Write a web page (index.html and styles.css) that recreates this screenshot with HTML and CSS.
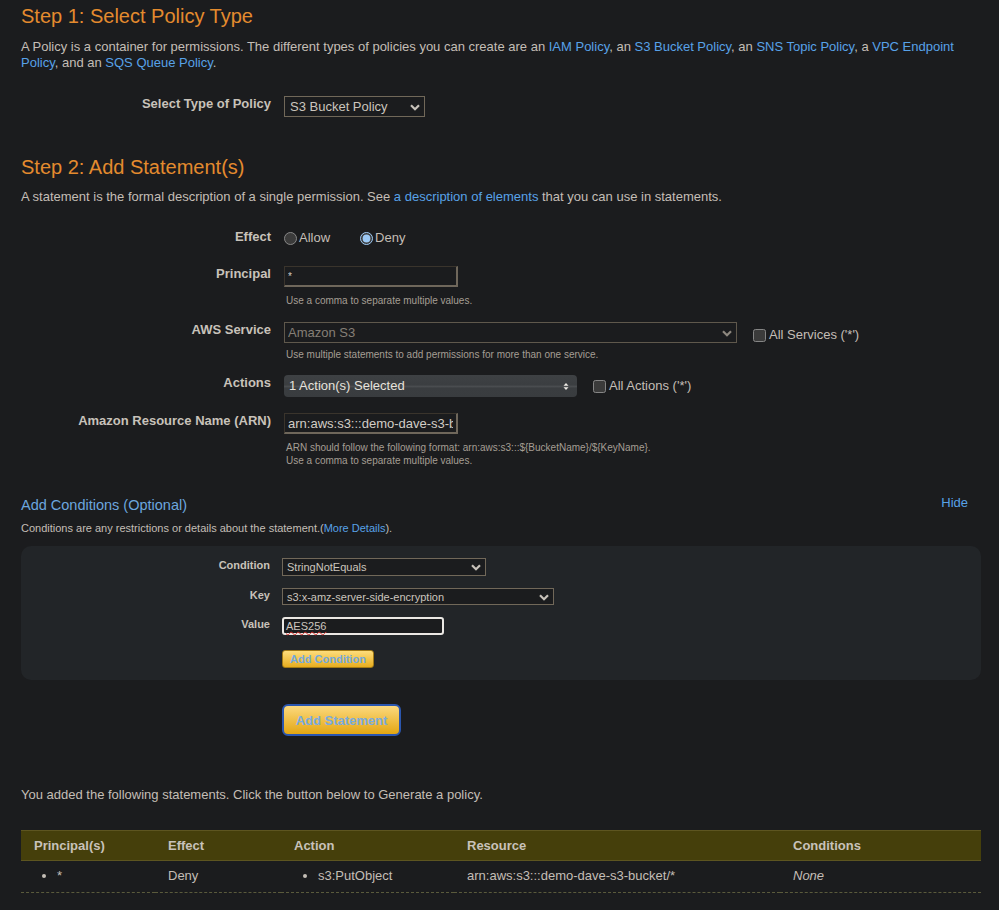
FILE: index.html
```html
<!DOCTYPE html>
<html lang="en">
<head>
<meta charset="utf-8">
<title>AWS Policy Generator</title>
<link rel="stylesheet" href="styles.css">
</head>
<body>
<main class="page">
  <h2 class="step-title">Step 1: Select Policy Type</h2>
  <p class="intro">A Policy is a container for permissions. The different types of policies you can create are an <a href="#">IAM Policy</a>, an <a href="#">S3 Bucket Policy</a>, an <a href="#">SNS Topic Policy</a>, a <a href="#">VPC Endpoint</a> <a href="#">Policy</a>, and an <a href="#">SQS Queue Policy</a>.</p>

  <div class="field field-policy">
    <label class="field-label">Select Type of Policy</label>
    <div class="field-control">
      <span class="select-wrap sel-policy">
        <select class="select"><option>S3 Bucket Policy</option></select>
        <svg class="chev" width="10" height="7" viewBox="0 0 10 7"><path d="M1 1.2 L5 5.2 L9 1.2" fill="none" stroke="currentColor" stroke-width="2.2"/></svg>
      </span>
    </div>
  </div>

  <h2 class="step-title step2">Step 2: Add Statement(s)</h2>
  <p class="intro2">A statement is the formal description of a single permission. See <a href="#">a description of elements</a> that you can use in statements.</p>

  <div class="field field-effect">
    <label class="field-label">Effect</label>
    <div class="field-control radios">
      <label class="radio"><input type="radio" name="effect">Allow</label>
      <label class="radio"><input type="radio" name="effect" checked>Deny</label>
    </div>
  </div>

  <div class="field field-principal">
    <label class="field-label">Principal</label>
    <div class="field-control">
      <input class="text-input input-principal" type="text" value="*">
      <div class="hint hint-principal">Use a comma to separate multiple values.</div>
    </div>
  </div>

  <div class="field field-service">
    <label class="field-label">AWS Service</label>
    <div class="field-control">
      <div class="control-line">
        <span class="select-wrap sel-service">
          <select class="select" disabled><option>Amazon S3</option></select>
          <svg class="chev" width="10" height="7" viewBox="0 0 10 7"><path d="M1 1.2 L5 5.2 L9 1.2" fill="none" stroke="currentColor" stroke-width="2.2"/></svg>
        </span>
        <label class="check check-services"><input type="checkbox">All Services ('*')</label>
      </div>
      <div class="hint hint-service">Use multiple statements to add permissions for more than one service.</div>
    </div>
  </div>

  <div class="field field-actions">
    <label class="field-label">Actions</label>
    <div class="field-control">
      <div class="control-line">
        <div class="multi-select">
          <span>1 Action(s) Selected</span>
          <svg width="6" height="9" viewBox="0 0 6 9"><path d="M0.5 3.8 L3 1 L5.5 3.8 Z M0.5 5.2 L3 8 L5.5 5.2 Z" fill="#ece9e4"/></svg>
        </div>
        <label class="check check-actions"><input type="checkbox">All Actions ('*')</label>
      </div>
    </div>
  </div>

  <div class="field field-arn">
    <label class="field-label">Amazon Resource Name (ARN)</label>
    <div class="field-control">
      <input class="text-input input-arn" type="text" value="arn:aws:s3:::demo-dave-s3-bucket/*">
      <div class="hint hint-arn">ARN should follow the following format: arn:aws:s3:::${BucketName}/${KeyName}.<br>Use a comma to separate multiple values.</div>
    </div>
  </div>

  <div class="conditions-head">
    <h3 class="conditions-title">Add Conditions (Optional)</h3>
    <a href="#" class="hide-link">Hide</a>
  </div>
  <p class="conditions-desc">Conditions are any restrictions or details about the statement.(<a href="#">More Details</a>).</p>

  <section class="conditions-box">
    <div class="cfield">
      <label class="cfield-label">Condition</label>
      <span class="select-wrap sel-condition">
        <select class="select select-small"><option>StringNotEquals</option></select>
        <svg class="chev" width="10" height="7" viewBox="0 0 10 7"><path d="M1 1.2 L5 5.2 L9 1.2" fill="none" stroke="currentColor" stroke-width="2.2"/></svg>
      </span>
    </div>
    <div class="cfield cfield-key">
      <label class="cfield-label">Key</label>
      <span class="select-wrap sel-key">
        <select class="select select-small"><option>s3:x-amz-server-side-encryption</option></select>
        <svg class="chev" width="10" height="7" viewBox="0 0 10 7"><path d="M1 1.2 L5 5.2 L9 1.2" fill="none" stroke="currentColor" stroke-width="2.2"/></svg>
      </span>
    </div>
    <div class="cfield cfield-value">
      <label class="cfield-label">Value</label>
      <div class="value-input"><span class="misspelled">AES256</span></div>
    </div>
    <div class="cfield cfield-button">
      <span></span>
      <button class="btn-small" type="button">Add Condition</button>
    </div>
  </section>

  <div class="statement-action">
    <button class="btn-large" type="button">Add Statement</button>
  </div>

  <p class="added-text">You added the following statements. Click the button below to Generate a policy.</p>

  <table class="statements">
    <colgroup>
      <col class="col-principal">
      <col class="col-effect">
      <col class="col-action">
      <col class="col-resource">
      <col class="col-conditions">
    </colgroup>
    <thead>
      <tr><th>Principal(s)</th><th>Effect</th><th>Action</th><th>Resource</th><th>Conditions</th></tr>
    </thead>
    <tbody>
      <tr>
        <td><ul class="cell-list"><li>*</li></ul></td>
        <td>Deny</td>
        <td><ul class="cell-list list-action"><li>s3:PutObject</li></ul></td>
        <td>arn:aws:s3:::demo-dave-s3-bucket/*</td>
        <td><em>None</em></td>
      </tr>
    </tbody>
  </table>
</main>
</body>
</html>
```

FILE: styles.css
```css
* { box-sizing: border-box; }

html, body {
  background: #1b1c1e;
}

body {
  margin: 0;
  color: #c4beb6;
  font-family: "Liberation Sans", Arial, sans-serif;
  font-size: 13px;
  line-height: 16px;
}

a {
  color: #58a2e8;
  text-decoration: none;
}

.page {
  width: 960px;
  margin-left: 21px;
  padding-top: 4px;
  padding-bottom: 18px;
}

.step-title {
  margin: 0;
  font-size: 20px;
  line-height: 24px;
  font-weight: normal;
  color: #e48b2e;
}

.intro {
  margin: 11px 0 0;
}

.step2 {
  margin-top: 38px;
}

.intro2 {
  margin: 10px 0 0;
}

/* form rows */
.field {
  display: grid;
  grid-template-columns: 250px 1fr;
  column-gap: 13px;
  align-items: start;
}

.field-label {
  text-align: right;
  font-weight: bold;
  line-height: 15px;
  color: #c8c2ba;
}

.field-policy { margin-top: 25px; }
.field-effect { margin-top: 25px; }
.field-principal { margin-top: 20px; }
.field-service { margin-top: 15px; }
.field-actions { margin-top: 14px; }
.field-arn { margin-top: 16px; }

.field-effect .field-label { margin-top: -1px; }

.select-wrap {
  position: relative;
  display: inline-block;
  vertical-align: top;
  color: #c8c2ba;
}

.select-wrap .chev {
  position: absolute;
  right: 5px;
  top: 50%;
  margin-top: -3px;
  pointer-events: none;
}

.select {
  appearance: none;
  -webkit-appearance: none;
  display: block;
  width: 100%;
  height: 21px;
  margin: 0;
  padding: 0 18px 0 4px;
  border: 1px solid #716859;
  border-radius: 0;
  background: #1b1c1e;
  color: #cbc5bd;
  font-family: "Liberation Sans", Arial, sans-serif;
  font-size: 13px;
}

.sel-policy { width: 141px; }
.sel-policy .select { padding-left: 5px; }
.sel-service { width: 453px; }
.sel-service .select {
  color: #857f76;
  border-color: #5f584c;
  opacity: 1;
  padding-left: 3px;
}
.sel-service .chev { color: #8e887f; }

.radios {
  display: flex;
  align-items: center;
  gap: 30px;
  height: 16px;
}

.radio {
  display: flex;
  align-items: center;
  gap: 2px;
  color: #c4beb6;
}

.radio input {
  margin: 0;
  width: 13px;
  height: 13px;
  color-scheme: dark;
  accent-color: #9cc9f5;
}

.text-input {
  display: block;
  width: 174px;
  height: 21px;
  margin: 0;
  padding: 0 3px;
  background: #1b1c1e;
  color: #d2cdc6;
  font-family: "Liberation Sans", Arial, sans-serif;
  font-size: 13px;
  border-style: solid;
  border-width: 1px 2px 2px 1px;
  border-color: #3a342c #6f675b #6f675b #3a342c;
  outline: none;
}

.input-principal {
  font-size: 10px;
}

.hint {
  font-size: 10px;
  line-height: 13px;
  color: #a59e94;
  padding-left: 2px;
}

.hint-principal { margin-top: 7px; }
.hint-service { margin-top: 5px; }
.hint-arn { margin-top: 7px; }

.control-line {
  display: flex;
  align-items: center;
  gap: 16px;
}

.check {
  display: flex;
  align-items: center;
  gap: 3px;
  color: #c4beb6;
  position: relative;
}

.check input {
  margin: 1px 0 0 0;
  width: 13px;
  height: 13px;
  color-scheme: dark;
}

.check-services { top: 2px; }
.check-actions { top: 0; }

.multi-select {
  width: 293px;
  height: 22px;
  border-radius: 4px;
  background: linear-gradient(#3e4144 0%, #3b3e41 45%, #4a4d50 52%, #3a3d40 60%, #393c3f 100%);
  color: #e6e2dc;
  display: flex;
  align-items: center;
  justify-content: space-between;
  padding: 0 8px 0 5px;
}

/* conditions */
.conditions-head {
  margin-top: 30px;
  display: flex;
  justify-content: space-between;
  align-items: center;
  padding-right: 13px;
}

.conditions-title {
  margin: 0;
  font-size: 14.5px;
  line-height: 17px;
  font-weight: normal;
  color: #6ca6df;
}

.hide-link {
  font-size: 13px;
  margin-top: -6px;
}

.conditions-desc {
  margin: 8px 0 0;
  font-size: 11px;
  line-height: 13px;
  color: #c4beb6;
}

.conditions-box {
  margin-top: 11px;
  background: #222528;
  border-radius: 10px;
  padding: 12px 0 12px;
}

.cfield {
  display: grid;
  grid-template-columns: 249px 1fr;
  column-gap: 12px;
  align-items: start;
}

.cfield-key { margin-top: 12px; }
.cfield-value { margin-top: 12px; }
.cfield-button { margin-top: 15px; }

.cfield-label {
  text-align: right;
  font-weight: bold;
  font-size: 11px;
  line-height: 14px;
  color: #c8c2ba;
}

.select-small {
  height: 18px;
  font-size: 11px;
  padding-left: 4px;
}

.sel-condition { width: 204px; justify-self: start; }
.sel-key { width: 272px; justify-self: start; }
.sel-key .select { height: 17px; }

.value-input {
  width: 162px;
  height: 18px;
  border: 2px solid #ebe8e4;
  border-radius: 3px;
  background: #1b1c1e;
  font-size: 11px;
  line-height: 14px;
  padding-left: 2px;
  color: #ccc6be;
}

.misspelled {
  text-decoration: underline wavy #d8302c;
  text-decoration-thickness: 1px;
  text-underline-offset: 1px;
}

.btn-small {
  justify-self: start;
  width: 92px;
  height: 18px;
  margin: 0;
  padding: 0;
  border: 1px solid #a27a16;
  border-radius: 3px;
  background: linear-gradient(#fedd7c, #e7ad1f);
  color: #73a9de;
  font-family: "Liberation Sans", Arial, sans-serif;
  font-weight: bold;
  font-size: 11px;
}

.statement-action {
  margin-top: 24px;
  padding-left: 261px;
}

.btn-large {
  width: 119px;
  height: 32px;
  margin: 0;
  padding: 0;
  border: 2px solid #2b56ae;
  border-radius: 6px;
  background: linear-gradient(#fcd97e, #e3a612);
  color: #78abe0;
  font-family: "Liberation Sans", Arial, sans-serif;
  font-weight: bold;
  font-size: 13px;
}

.added-text {
  margin: 51px 0 0;
}

/* table */
.statements {
  margin-top: 27px;
  width: 960px;
  border-collapse: collapse;
  table-layout: fixed;
}

.col-principal { width: 134px; }
.col-effect { width: 126px; }
.col-action { width: 173px; }
.col-resource { width: 326px; }
.col-conditions { width: 201px; }

.statements th {
  height: 30px;
  padding: 0 13px;
  text-align: left;
  font-weight: bold;
  color: #c8c2ba;
  background: #453f0b;
  border-top: 1px solid #5d5520;
  border-bottom: 1px solid #5d5520;
}

.statements td {
  height: 32px;
  padding: 0 13px 2px;
  color: #c4beb6;
  border-bottom: 1px dashed #5a5a3c;
  vertical-align: middle;
}

.statements em {
  font-style: italic;
}

.cell-list {
  margin: 0;
  padding-left: 23px;
}

.list-action {
  padding-left: 24px;
}
```
